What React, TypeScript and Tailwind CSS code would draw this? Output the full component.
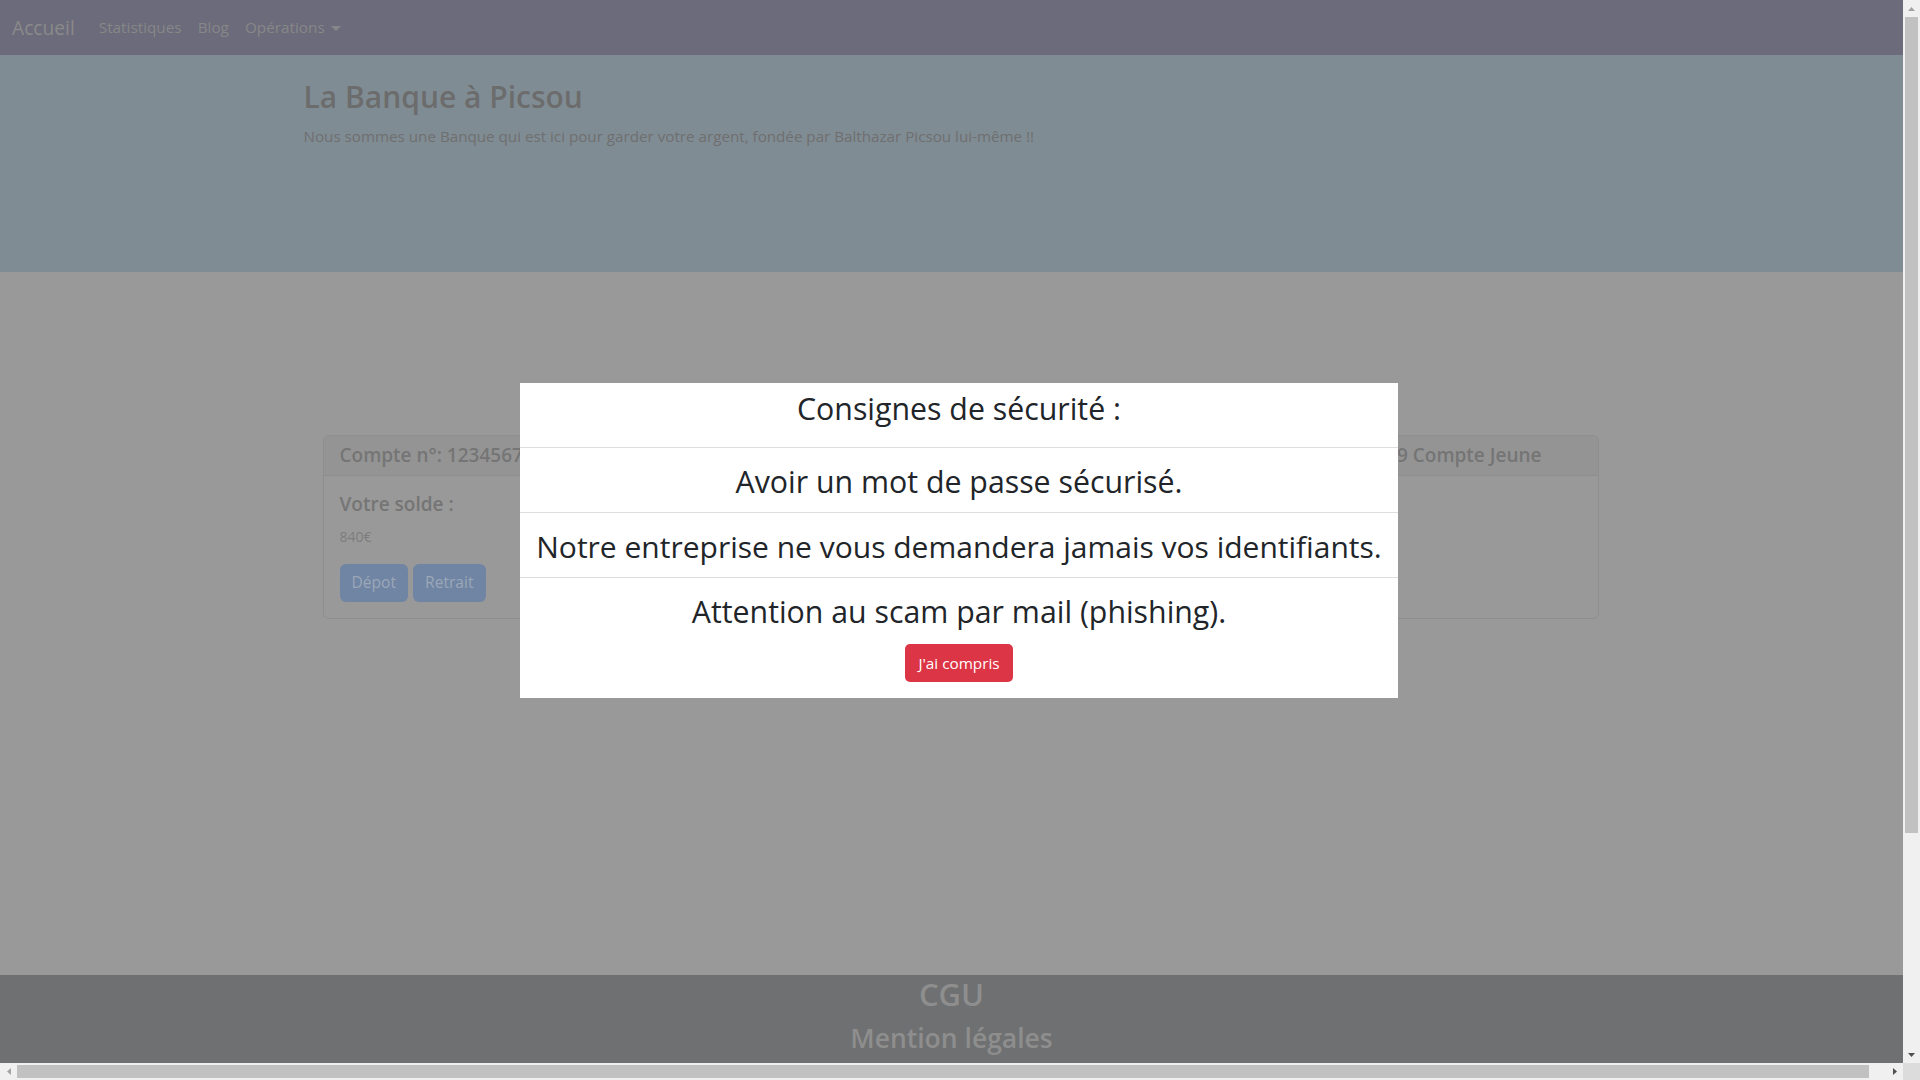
// Page as photographed: modal open over a dimmed page, with the browser's
// classic scrollbars visible on the right and at the bottom.

function Arrow({ dir, color }: { dir: 'up' | 'down' | 'left' | 'right'; color: string }) {
  const points = {
    up: '0,4 3.5,0 7,4',
    down: '0,0 7,0 3.5,4',
    left: '4,0 4,7 0,3.5',
    right: '0,0 0,7 4,3.5',
  }[dir]
  const vertical = dir === 'up' || dir === 'down'
  return (
    <svg width={vertical ? 7 : 4} height={vertical ? 4 : 7} viewBox={vertical ? '0 0 7 4' : '0 0 4 7'}>
      <polygon points={points} fill={color} />
    </svg>
  )
}

function Navbar() {
  return (
    <nav className="h-[55px] bg-[#6b6b7b] flex items-center px-[12px]">
      <span className="text-[19.2px] leading-[30px] text-[#8a8a8a] mr-[16px]">Accueil</span>
      <div className="flex items-center text-[15.3px] text-[#878787]">
        <span className="px-[8px]">Statistiques</span>
        <span className="px-[8px]">Blog</span>
        <span className="px-[8px] flex items-center gap-[6px]">
          Opérations
          <span className="inline-block w-0 h-0 border-x-[5px] border-x-transparent border-t-[5px] border-t-[#878787] mt-[2px]" />
        </span>
      </div>
    </nav>
  )
}

function Jumbotron() {
  return (
    <header className="h-[217px] bg-[#808c94]">
      <div className="w-[1320px] mx-auto px-[12px] pt-[23px]">
        <h1 className="text-[30px] leading-[38px] font-semibold text-[#6c6c6c] mb-[8px]">La Banque à Picsou</h1>
        <p className="text-[15.2px] leading-[24px] text-[#6f6f6f]">
          Nous sommes une Banque qui est ici pour garder votre argent, fondée par Balthazar Picsou lui-même !!
        </p>
      </div>
    </header>
  )
}

function AccountCard() {
  return (
    <div className="ml-[31px] w-[1276px] rounded-[6px] border border-[#8e8e8e] overflow-hidden">
      <div className="h-[40px] bg-[#949494] border-b border-[#8e8e8e] px-[16px] pr-[56px] flex items-center justify-between text-[19px] font-semibold text-[#757575]">
        <span>Compte n°: 123456789</span>
        <span>Ouvert le 14/02/2019 Compte Jeune</span>
      </div>
      <div className="p-[16px]">
        <h5 className="text-[19px] leading-[24px] font-semibold text-[#757575] mb-[10px]">Votre solde :</h5>
        <p className="text-[14px] leading-[21px] text-[#7d7d7d] mb-[17px]">840€</p>
        <div className="flex gap-[5px]">
          <button className="h-[38px] px-[12px] rounded-[6px] bg-[#7085a3] text-[15.6px] text-[#9ba7b8]">Dépot</button>
          <button className="h-[38px] px-[12px] rounded-[6px] bg-[#7085a3] text-[15.6px] text-[#9ba7b8]">Retrait</button>
        </div>
      </div>
    </div>
  )
}

function SecurityModal() {
  return (
    <div className="absolute left-[520px] top-[383px] w-[878px] bg-white text-center text-[#212529] text-[30px] leading-[38px]">
      <h2 className="pt-[7px] pb-[19px] text-[30.3px]">Consignes de sécurité :</h2>
      <p className="border-t border-[#dedede] pt-[15px] pb-[11px] text-[30.3px]">Avoir un mot de passe sécurisé.</p>
      <p className="border-t border-[#dedede] pt-[15px] pb-[11px] whitespace-nowrap">
        Notre entreprise ne vous demandera jamais vos identifiants.
      </p>
      <div className="border-t border-[#dedede] pt-[15px] pb-[16px] flex flex-col items-center">
        <p className="text-[30.3px]">Attention au scam par mail (phishing).</p>
        <button className="mt-[13px] h-[38px] w-[108px] rounded-[5px] bg-[#dc3545] text-white text-[15.3px] leading-[24px]">
          J'ai compris
        </button>
      </div>
    </div>
  )
}

export default function App() {
  return (
    <div className="w-[1920px] h-[1080px] overflow-hidden flex flex-col font-['Open_Sans',sans-serif]">
      <div className="flex">
        {/* page viewport */}
        <div className="relative w-[1903px] h-[1063px] overflow-hidden">
          <Navbar />
          <Jumbotron />
          <main className="h-[703px] bg-[#999999] pt-[163px]">
            <div className="w-[1320px] mx-auto">
              <AccountCard />
            </div>
          </main>
          <footer className="h-[400px] bg-[#6f7071] flex flex-col items-center font-semibold text-[#8e8e8e]">
            <h2 className="text-[31px] leading-[38px] mb-[8px]">CGU</h2>
            <h3 className="text-[26.5px] leading-[34px]">Mention légales</h3>
          </footer>
          <SecurityModal />
        </div>
        {/* vertical scrollbar */}
        <div className="w-[17px] h-[1063px] bg-[#f0f0f0] flex flex-col items-center">
          <div className="h-[17px] flex items-center justify-center">
            <Arrow dir="up" color="#a3a3a3" />
          </div>
          <div className="w-[13px] h-[816px] bg-[#c1c1c1]" />
          <div className="flex-1" />
          <div className="h-[17px] flex items-center justify-center">
            <Arrow dir="down" color="#505050" />
          </div>
        </div>
      </div>
      <div className="flex">
        {/* horizontal scrollbar */}
        <div className="w-[1903px] h-[17px] bg-[#f0f0f0] flex items-center">
          <div className="w-[17px] flex justify-center">
            <Arrow dir="left" color="#a3a3a3" />
          </div>
          <div className="w-[1852px] h-[13px] bg-[#c1c1c1]" />
          <div className="flex-1" />
          <div className="w-[17px] flex justify-center">
            <Arrow dir="right" color="#505050" />
          </div>
        </div>
        <div className="w-[17px] h-[17px] bg-[#dcdcdc]" />
      </div>
    </div>
  )
}
